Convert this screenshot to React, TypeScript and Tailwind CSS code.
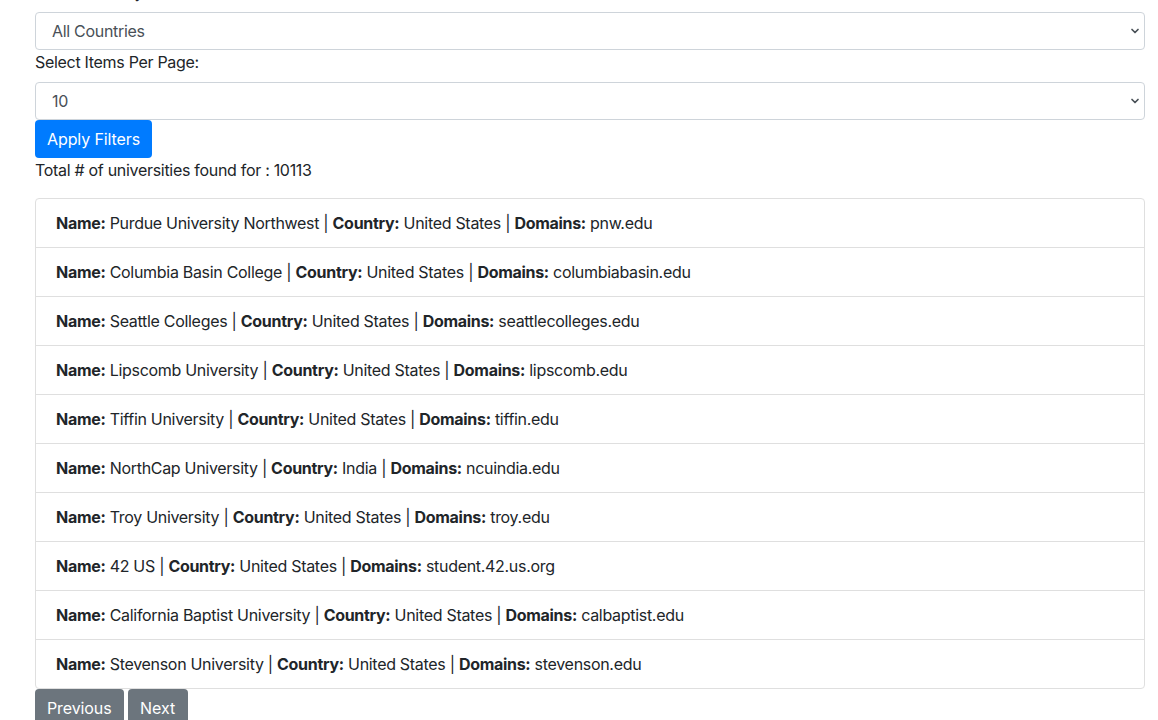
import { useState } from "react";

type University = {
  name: string;
  country: string;
  domain: string;
};

const universities: University[] = [
  { name: "Purdue University Northwest", country: "United States", domain: "pnw.edu" },
  { name: "Columbia Basin College", country: "United States", domain: "columbiabasin.edu" },
  { name: "Seattle Colleges", country: "United States", domain: "seattlecolleges.edu" },
  { name: "Lipscomb University", country: "United States", domain: "lipscomb.edu" },
  { name: "Tiffin University", country: "United States", domain: "tiffin.edu" },
  { name: "NorthCap University", country: "India", domain: "ncuindia.edu" },
  { name: "Troy University", country: "United States", domain: "troy.edu" },
  { name: "42 US", country: "United States", domain: "student.42.us.org" },
  { name: "California Baptist University", country: "United States", domain: "calbaptist.edu" },
  { name: "Stevenson University", country: "United States", domain: "stevenson.edu" },
];

const Chevron = () => (
  <svg
    className="pointer-events-none absolute right-[5px] top-1/2 -translate-y-1/2"
    width="10"
    height="10"
    viewBox="0 0 10 10"
    fill="none"
  >
    <path d="M2 3.5 5 6.5l3-3" stroke="#495057" strokeWidth="1.7" strokeLinecap="round" strokeLinejoin="round" />
  </svg>
);

const App = () => {
  const [country, setCountry] = useState("all");
  const [perPage, setPerPage] = useState("10");

  return (
    <div
      className="min-h-screen bg-white text-[16px] leading-6 tracking-[-0.3px] text-[#212529]"
      style={{ fontFamily: "Inter, Roboto, 'Liberation Sans', sans-serif" }}
    >
      <div className="-mt-[20px] ml-[35px] w-[1110px]">
        <label className="mb-2 block">Select Country:</label>
        <div className="relative">
          <select
            value={country}
            onChange={(e) => setCountry(e.target.value)}
            className="block h-[38px] w-full appearance-none rounded border border-[#ced4da] bg-white px-4 text-[#495057] outline-none"
          >
            <option value="all">All Countries</option>
            <option value="us">United States</option>
            <option value="in">India</option>
          </select>
          <Chevron />
        </div>

        <label className="mb-2 block">Select Items Per Page:</label>
        <div className="relative">
          <select
            value={perPage}
            onChange={(e) => setPerPage(e.target.value)}
            className="block h-[38px] w-full appearance-none rounded border border-[#ced4da] bg-white px-4 text-[#495057] outline-none"
          >
            <option value="10">10</option>
            <option value="20">20</option>
            <option value="50">50</option>
          </select>
          <Chevron />
        </div>

        <button className="h-[38px] rounded bg-[#007bff] px-3 tracking-[-0.1px] text-white">
          Apply Filters
        </button>
        <p className="mb-4">Total # of universities found for : 10113</p>

        <ul className="rounded border border-[#dfdfdf]">
          {universities.map((u, i) => (
            <li
              key={u.name}
              className={`px-5 py-3 ${i > 0 ? "border-t border-[#dfdfdf]" : ""}`}
            >
              <b className="font-bold">Name:</b> {u.name} | <b className="font-bold">Country:</b>{" "}
              {u.country} | <b className="font-bold">Domains:</b> {u.domain}
            </li>
          ))}
        </ul>

        <div className="flex gap-1">
          <button className="h-[38px] rounded bg-[#6c757d] px-3 tracking-[-0.1px] text-white">
            Previous
          </button>
          <button className="h-[38px] w-[60px] rounded bg-[#6c757d] tracking-[-0.1px] text-white">
            Next
          </button>
        </div>
      </div>
    </div>
  );
};

export default App;
